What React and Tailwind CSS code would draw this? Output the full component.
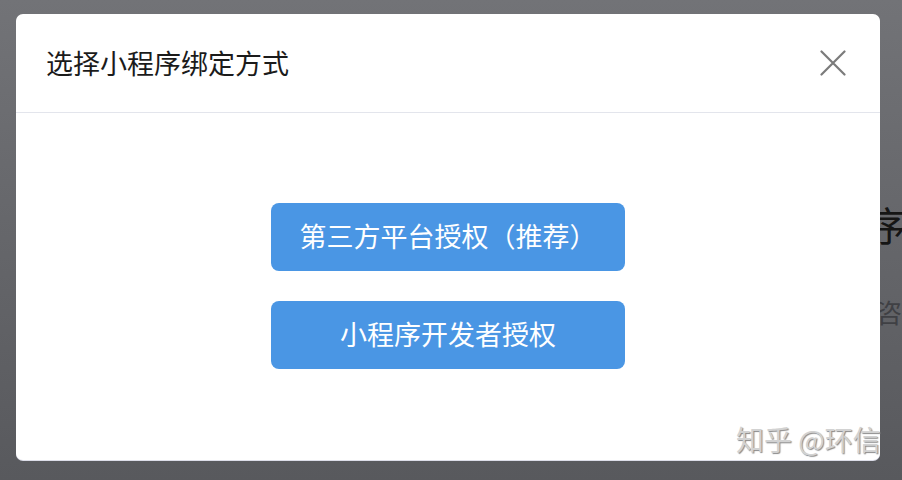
const App = () => {
  return (
    <div
      className="relative h-[480px] w-[902px] overflow-hidden bg-gradient-to-b from-[#727377] to-[#58595d]"
      style={{ fontFamily: '"Noto Sans CJK SC", "Noto Sans", sans-serif' }}
    >
      {/* page content behind the overlay */}
      <div className="absolute left-[826px] top-[204px] whitespace-nowrap text-[40px] leading-none text-[#151515]">
        程序
      </div>
      <div className="absolute left-[850px] top-[299px] whitespace-nowrap text-[26px] leading-none text-[#3f4044]">
        询咨
      </div>

      {/* dialog */}
      <div className="absolute left-[16px] top-[14px] flex h-[446px] w-[864px] flex-col rounded-[7px] bg-white shadow-[0_1px_0_#dcdde8]">
        <div className="flex h-[99px] shrink-0 items-center justify-between border-b border-[#e3e5ec] pl-[30px] pr-[34px]">
          <h2 className="text-[27px] font-normal text-[#1b1b1b]">
            选择小程序绑定方式
          </h2>
          <svg width="26" height="26" viewBox="0 0 26 26" fill="none">
            <path
              d="M1.5 1.5L24.5 24.5M24.5 1.5L1.5 24.5"
              stroke="#7b7b7b"
              strokeWidth="2.2"
              strokeLinecap="round"
            />
          </svg>
        </div>

        <div className="flex flex-1 flex-col items-center justify-center gap-[30px] pb-[2px]">
          <button className="h-[68px] w-[354px] rounded-[8px] bg-[#4a96e4] text-[27px] text-white">
            第三方平台授权（推荐）
          </button>
          <button className="h-[68px] w-[354px] rounded-[8px] bg-[#4a96e4] text-[27px] text-white">
            小程序开发者授权
          </button>
        </div>
      </div>

      {/* watermark */}
      <div className="absolute left-[736px] top-[425px] whitespace-nowrap text-[28px] leading-none text-[#d2d2d2] [text-shadow:1px_1px_1px_#8a8a8a]">
        知乎 @环信
      </div>
    </div>
  );
};

export default App;
